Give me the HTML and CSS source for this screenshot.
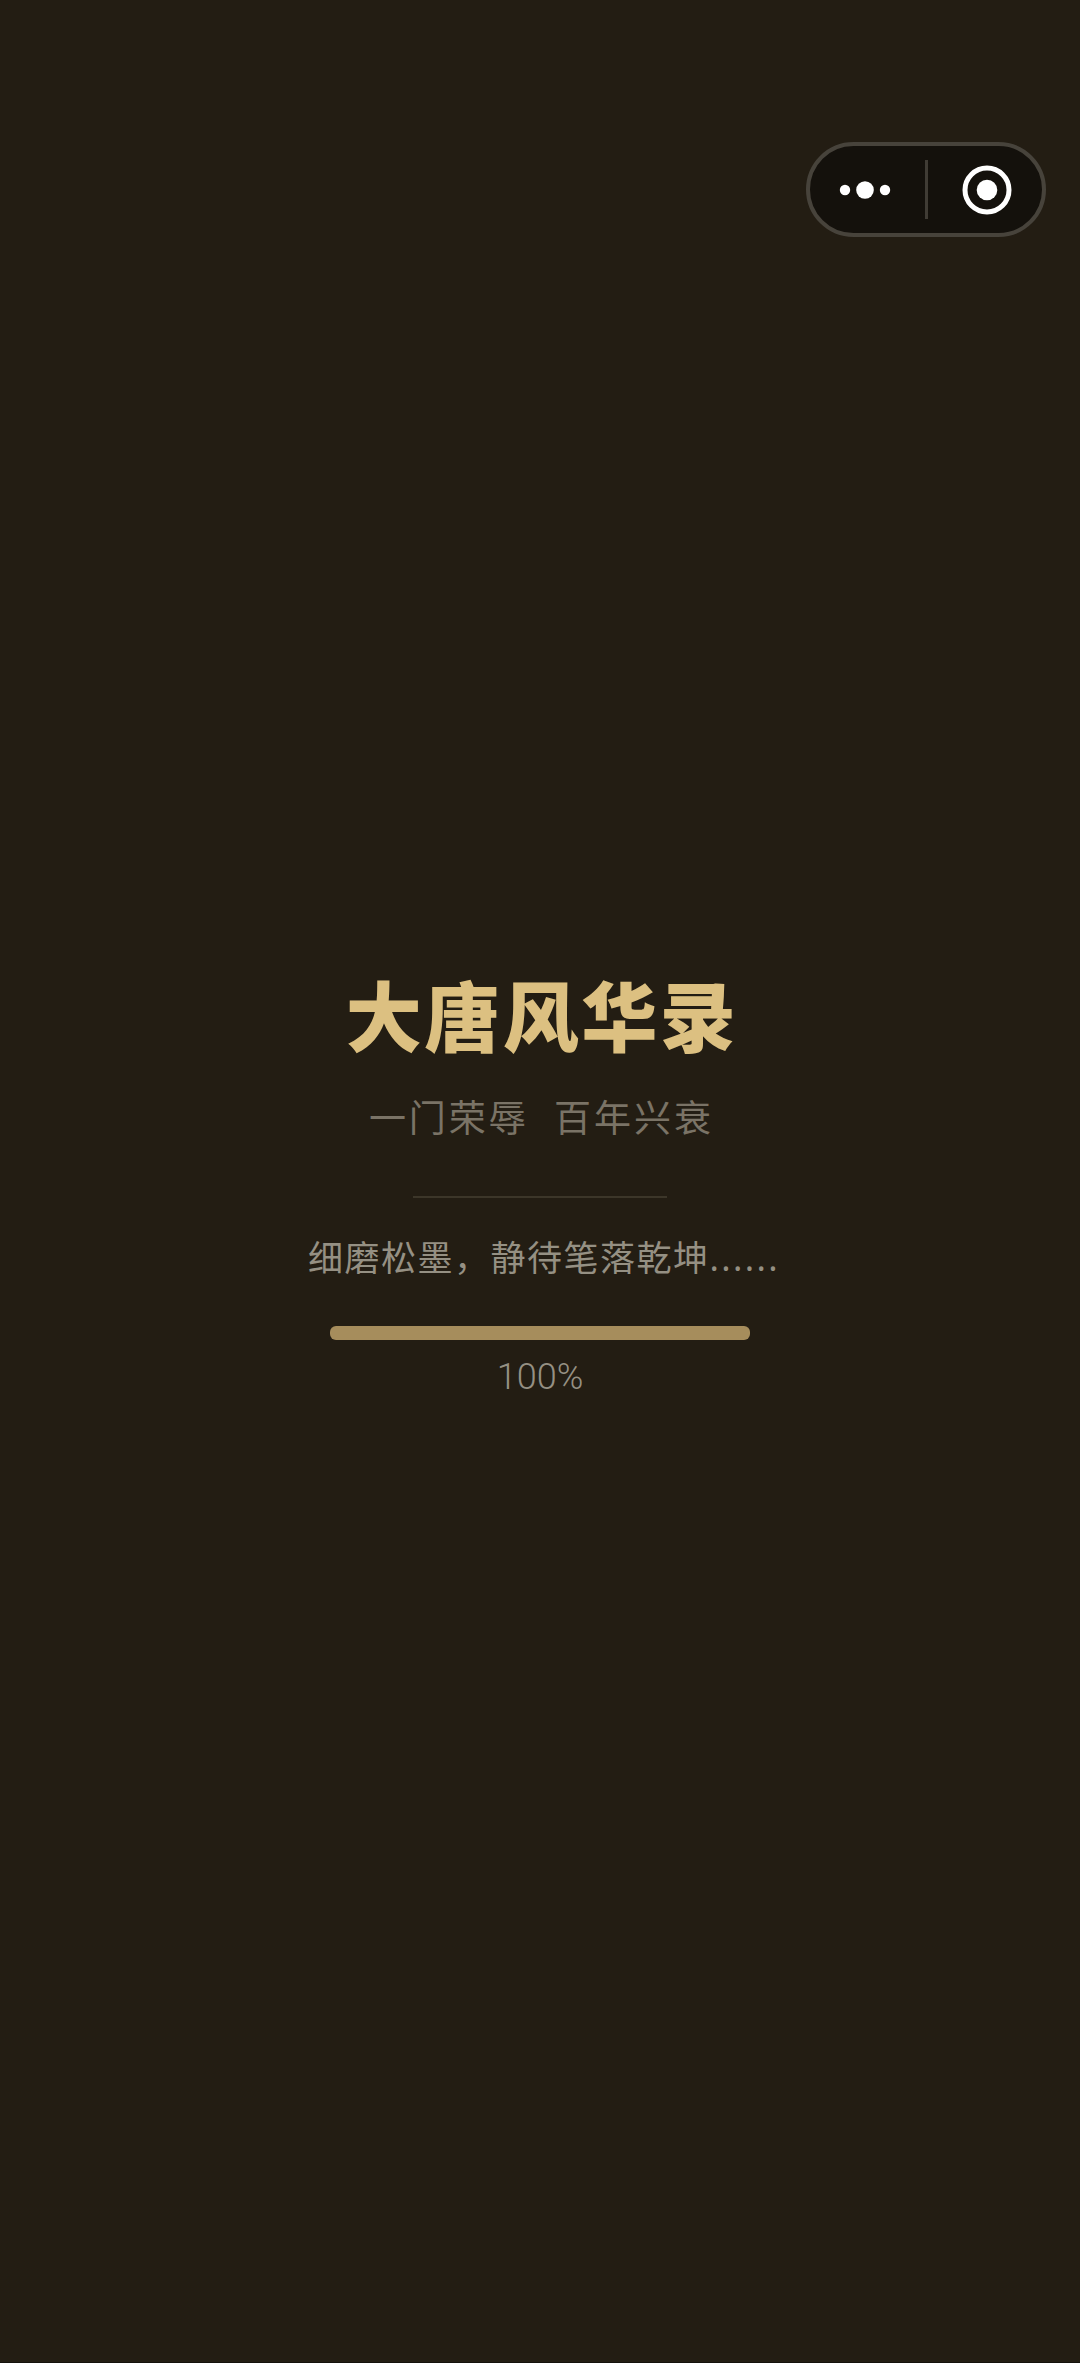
FILE: index.html
```html
<!DOCTYPE html>
<html lang="zh-Hans">
<head>
    <meta charset="UTF-8">
    <meta name="viewport" content="width=device-width, initial-scale=1.0">
    <title>大唐风华录</title>
    <link rel="stylesheet" href="styles.css">
</head>
<body>
    <div class="capsule">
        <svg class="capsule-more" width="60" height="20" viewBox="0 0 60 20">
            <circle cx="10" cy="10" r="5.2" fill="#fff"/>
            <circle cx="30" cy="10" r="8.8" fill="#fff"/>
            <circle cx="50" cy="10" r="5.2" fill="#fff"/>
        </svg>
        <span class="capsule-line"></span>
        <svg class="capsule-close" width="50" height="50" viewBox="0 0 50 50">
            <circle cx="25" cy="25" r="22" fill="none" stroke="#fff" stroke-width="5"/>
            <circle cx="25" cy="25" r="10.3" fill="#fff"/>
        </svg>
    </div>

    <main class="loading">
        <h1 class="title">大唐风华录</h1>
        <p class="subtitle">一门荣辱&nbsp;&nbsp;百年兴衰</p>
        <div class="divider"></div>
        <p class="status">细磨松墨，静待笔落乾坤<span class="dots">......</span></p>
        <div class="bar"><div class="bar-fill" style="width: 100%"></div></div>
        <p class="percent">100%</p>
    </main>
</body>
</html>
```

FILE: styles.css
```css
:root {
    --bg-color: #231d13;
    --gold-color: #dcc081;
    --bar-color: #a68d5c;
    --sub-color: #7a7366;
    --text-color: #959083;
}

* {
    margin: 0;
    padding: 0;
    box-sizing: border-box;
}

html, body {
    height: 100%;
}

body {
    font-family: "Noto Sans", "Noto Sans CJK SC", sans-serif;
    background-color: var(--bg-color);
    border-bottom: 1px solid #14110c;
    overflow: hidden;
}

.capsule {
    position: absolute;
    top: 142px;
    left: 806px;
    width: 240px;
    height: 95px;
    display: flex;
    align-items: center;
    background-color: #14110c;
    border: 4px solid #47433b;
    border-radius: 48px;
}

.capsule-more {
    margin-left: 25px;
}

.capsule-line {
    width: 3px;
    height: 59px;
    margin-left: 30px;
    background-color: #403c35;
}

.capsule-close {
    margin-left: 34px;
}

.loading {
    display: flex;
    flex-direction: column;
    align-items: center;
    padding-top: 965px;
}

.title {
    padding-left: 4px;
    font-size: 76px;
    line-height: 104px;
    font-weight: 900;
    letter-spacing: 2.5px;
    color: var(--gold-color);
}

.subtitle {
    margin-top: 23px;
    padding-left: 3px;
    font-size: 37px;
    line-height: 52px;
    letter-spacing: 3px;
    color: var(--sub-color);
}

.divider {
    width: 254px;
    height: 2px;
    margin-top: 52px;
    background-color: #3c3629;
}

.status {
    margin-top: 36px;
    padding-left: 8px;
    font-size: 35px;
    line-height: 48px;
    letter-spacing: 1.5px;
    color: var(--text-color);
}

.dots {
    letter-spacing: 2.4px;
}

.bar {
    width: 420px;
    height: 14px;
    margin-top: 44px;
    border-radius: 6px;
    overflow: hidden;
}

.bar-fill {
    height: 100%;
    background-color: var(--bar-color);
}

.percent {
    margin-top: 13px;
    font-family: Roboto, sans-serif;
    font-size: 36px;
    font-weight: 300;
    line-height: 48px;
    color: var(--text-color);
}
```
